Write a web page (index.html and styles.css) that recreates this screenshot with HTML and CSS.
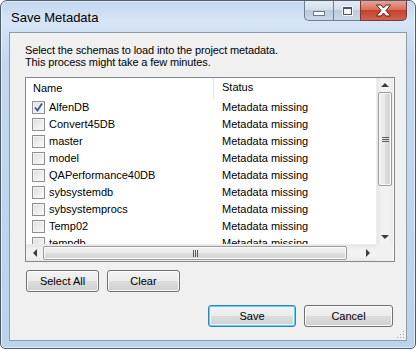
FILE: index.html
```html
<!DOCTYPE html>
<html>
<head>
<meta charset="utf-8">
<link rel="stylesheet" href="styles.css">
</head>
<body>
<div class="window">
  <div class="titlebar">
    <div class="title">Save Metadata</div>
    <div class="caption-btns">
      <div class="cap cap-min"><span class="min-glyph"></span></div>
      <div class="cap cap-max"><span class="max-glyph"></span></div>
      <div class="cap cap-close">
        <svg width="17" height="13" viewBox="0 0 17 13"><path d="M1.5 1 L6 1 L8.5 4 L11 1 L15.5 1 L11 6.5 L15.5 12 L11 12 L8.5 9 L6 12 L1.5 12 L6 6.5 Z" fill="#fff" stroke="#5a2020" stroke-width="1" stroke-linejoin="round"/></svg>
      </div>
    </div>
  </div>
  <div class="client">
    <p class="intro">Select the schemas to load into the project metadata.<br>This process might take a few minutes.</p>
    <div class="listview">
      <div class="lv-content">
        <div class="lv-header">
          <div class="col-name">Name</div>
          <div class="col-status">Status</div>
        </div>
        <div class="lv-row"><div class="col-name"><span class="cb checked"><svg width="11" height="11" viewBox="0 0 11 11"><path d="M2 5.5 L4.5 8.5 L9 1.5" fill="none" stroke="#3c5396" stroke-width="1.8"/></svg></span>AlfenDB</div><div class="col-status">Metadata missing</div></div>
        <div class="lv-row"><div class="col-name"><span class="cb"></span>Convert45DB</div><div class="col-status">Metadata missing</div></div>
        <div class="lv-row"><div class="col-name"><span class="cb"></span>master</div><div class="col-status">Metadata missing</div></div>
        <div class="lv-row"><div class="col-name"><span class="cb"></span>model</div><div class="col-status">Metadata missing</div></div>
        <div class="lv-row"><div class="col-name"><span class="cb"></span>QAPerformance40DB</div><div class="col-status">Metadata missing</div></div>
        <div class="lv-row"><div class="col-name"><span class="cb"></span>sybsystemdb</div><div class="col-status">Metadata missing</div></div>
        <div class="lv-row"><div class="col-name"><span class="cb"></span>sybsystemprocs</div><div class="col-status">Metadata missing</div></div>
        <div class="lv-row"><div class="col-name"><span class="cb"></span>Temp02</div><div class="col-status">Metadata missing</div></div>
        <div class="lv-row"><div class="col-name"><span class="cb"></span>tempdb</div><div class="col-status">Metadata missing</div></div>
      </div>
      <div class="vscroll">
        <div class="sb-btn"><span class="arr-up"></span></div>
        <div class="vthumb"><span class="grip-h"></span></div>
        <div class="sb-track"></div>
        <div class="sb-btn"><span class="arr-down"></span></div>
      </div>
      <div class="hscroll">
        <div class="sb-btn-h"><span class="arr-left"></span></div>
        <div class="hthumb"><span class="grip-v"></span></div>
        <div class="sb-track"></div>
        <div class="sb-btn-h"><span class="arr-right"></span></div>
      </div>
      <div class="corner"></div>
    </div>
    <div class="row-btns">
      <button class="btn w73">Select All</button>
      <button class="btn w73">Clear</button>
    </div>
    <div class="row-dialog">
      <button class="btn btn-default w88">Save</button>
      <button class="btn w89">Cancel</button>
    </div>
    <div class="grip">
      <i class="d d1"></i><i class="d d2"></i><i class="d d3"></i><i class="d d4"></i><i class="d d5"></i><i class="d d6"></i>
    </div>
  </div>
</div>
</body>
</html>
```
FILE: styles.css
```css
html, body {
  margin: 0;
  padding: 0;
  background: #ffffff;
}
.window {
  width: 416px;
  height: 349px;
  box-sizing: border-box;
  border: 1px solid #4e5c6c;
  border-radius: 7px 7px 5px 5px;
  background: linear-gradient(180deg, #c2d7ee 0px, #d6e5f6 20px, #c3d8ef 60px, #bcd3ec 100%);
  padding: 0 8px 7px 8px;
  display: flex;
  flex-direction: column;
  box-shadow: inset 0 0 0 1px rgba(255,255,255,0.55);
}
.titlebar {
  height: 31px;
  display: flex;
  align-items: flex-start;
  justify-content: space-between;
  flex: none;
}
.title {
  font-family: "Liberation Sans", Arial, sans-serif;
  font-size: 13px;
  line-height: 15px;
  color: #000;
  margin-top: 9px;
  margin-left: 2px;
}
.caption-btns {
  display: flex;
  height: 20px;
}
.cap {
  height: 20px;
  box-sizing: border-box;
  border: 1px solid #6f7f92;
  border-top: none;
  display: flex;
  align-items: center;
  justify-content: center;
}
.cap-min {
  width: 29px;
  border-radius: 0 0 0 5px;
  background: linear-gradient(180deg, #e3ebf5 0%, #d4dfec 45%, #bccbdd 50%, #c8d6e7 100%);
  border-right: none;
}
.cap-max {
  width: 27px;
  background: linear-gradient(180deg, #e3ebf5 0%, #d4dfec 45%, #bccbdd 50%, #c8d6e7 100%);
  border-right: none;
}
.cap-close {
  width: 47px;
  border-radius: 0 0 5px 0;
  border-color: #7b3a3a;
  background: linear-gradient(180deg, #e8a493 0%, #d8705d 45%, #c4422e 50%, #d2634f 100%);
}
.min-glyph {
  width: 10px;
  height: 3px;
  border: 1px solid #6a7689;
  background: #f7f9fc;
  margin-top: 5px;
}
.max-glyph {
  width: 7px;
  height: 5px;
  border: 1px solid #4a5568;
  border-top-width: 2px;
  background: #f7f9fc;
  box-shadow: 0 0 0 1px #f2f5fa;
}
.client {
  flex: 1;
  box-sizing: border-box;
  background: #f0f0f0;
  border: 1px solid #8d9baa;
  padding: 0 10px 0 15px;
  display: flex;
  flex-direction: column;
  position: relative;
  font-family: "Liberation Sans", Arial, sans-serif;
  font-size: 11px;
  color: #000;
}
.intro {
  margin: 11px 0 0 0;
  line-height: 12px;
  letter-spacing: -0.12px;
}
.listview {
  margin-top: 9px;
  width: 370px;
  height: 185px;
  box-sizing: border-box;
  border: 1px solid #828790;
  background: #fff;
  display: grid;
  grid-template-columns: 350px 17px;
  grid-template-rows: 166px 17px;
  overflow: hidden;
}
.lv-content {
  overflow: hidden;
  background: #fff;
}
.lv-header {
  display: flex;
  height: 21px;
  align-items: center;
  background: #fff;
}
.lv-header .col-name {
  border-right: 1px solid #e5e5e5;
  height: 21px;
  line-height: 19px;
  padding-left: 7px;
}
.lv-header .col-status {
  line-height: 19px;
  height: 21px;
}
.col-name {
  width: 188px;
  box-sizing: border-box;
  flex: none;
  display: flex;
  align-items: center;
}
.col-status {
  padding-left: 8px;
}
.lv-row {
  display: flex;
  height: 17px;
  align-items: center;
  line-height: 17px;
}
.lv-row .col-name {
  padding-left: 6px;
}
.cb {
  width: 13px;
  height: 13px;
  box-sizing: border-box;
  border: 1px solid #8f8f8f;
  background: linear-gradient(135deg, #dcdcdc 0%, #ececec 50%, #fbfbfb 100%);
  box-shadow: inset 0 0 0 1px #f4f4f4;
  margin-right: 4px;
  flex: none;
  display: flex;
  align-items: center;
  justify-content: center;
}
.cb.checked {
  background: linear-gradient(135deg, #d8dde8 0%, #eef1f6 60%, #fbfbfb 100%);
}
.vscroll {
  display: flex;
  flex-direction: column;
  background: linear-gradient(90deg, #e6e6e6 0%, #f2f2f2 30%, #f2f2f2 70%, #e9e9e9 100%);
  border-left: 1px solid #ececec;
  box-sizing: border-box;
}
.hscroll {
  display: flex;
  flex-direction: row;
  background: linear-gradient(180deg, #e6e6e6 0%, #f2f2f2 30%, #f2f2f2 70%, #e9e9e9 100%);
  border-top: 1px solid #ececec;
  box-sizing: border-box;
}
.corner {
  background: #f0f0f0;
}
.sb-btn {
  height: 14px;
  flex: none;
  display: flex;
  align-items: center;
  justify-content: center;
}
.sb-btn-h {
  width: 17px;
  flex: none;
  display: flex;
  align-items: center;
  justify-content: center;
}
.sb-track {
  flex: 1;
}
.arr-up {
  width: 0; height: 0;
  border-left: 4px solid transparent;
  border-right: 4px solid transparent;
  border-bottom: 4px solid #3c3c3c;
}
.arr-down {
  width: 0; height: 0;
  border-left: 4px solid transparent;
  border-right: 4px solid transparent;
  border-top: 4px solid #3c3c3c;
}
.arr-left {
  width: 0; height: 0;
  border-top: 4px solid transparent;
  border-bottom: 4px solid transparent;
  border-right: 4px solid #3c3c3c;
}
.arr-right {
  width: 0; height: 0;
  border-top: 4px solid transparent;
  border-bottom: 4px solid transparent;
  border-left: 4px solid #3c3c3c;
}
.vthumb {
  height: 94px;
  margin: 0 1px;
  flex: none;
  box-sizing: border-box;
  border: 1px solid #9b9b9b;
  border-radius: 2px;
  background: linear-gradient(90deg, #f0f0f0 0%, #ececec 45%, #dcdcdc 55%, #d3d3d3 100%);
  box-shadow: inset 0 0 0 1px #fbfbfb;
  display: flex;
  align-items: center;
  justify-content: center;
}
.hthumb {
  width: 304px;
  margin: 1px 0;
  flex: none;
  box-sizing: border-box;
  border: 1px solid #9b9b9b;
  border-radius: 2px;
  background: linear-gradient(180deg, #f0f0f0 0%, #ececec 45%, #dcdcdc 55%, #d3d3d3 100%);
  box-shadow: inset 0 0 0 1px #fbfbfb;
  display: flex;
  align-items: center;
  justify-content: center;
}
.grip-h {
  width: 7px;
  height: 5px;
  background: repeating-linear-gradient(180deg, #5a5a5a 0, #5a5a5a 1px, transparent 1px, transparent 2px);
}
.grip-v {
  width: 5px;
  height: 7px;
  background: repeating-linear-gradient(90deg, #5a5a5a 0, #5a5a5a 1px, transparent 1px, transparent 2px);
}
.row-btns {
  display: flex;
  gap: 8px;
  margin-top: 8px;
  padding-left: 1px;
}
.row-dialog {
  display: flex;
  gap: 8px;
  margin-top: 13px;
  justify-content: flex-end;
  width: 368px;
}
.btn {
  height: 22px;
  box-sizing: border-box;
  border: 1px solid #707070;
  border-radius: 3px;
  background: linear-gradient(180deg, #f2f2f2 0%, #ebebeb 50%, #dddddd 50%, #cfcfcf 100%);
  box-shadow: inset 0 0 0 1px #fbfbfb;
  font-family: "Liberation Sans", Arial, sans-serif;
  font-size: 11px;
  color: #000;
  padding: 0;
  margin: 0;
}
.btn-default {
  border-color: #3c7fb1;
  box-shadow: inset 0 0 0 1px #5fd2f5, inset 0 0 0 2px #eaf6fb;
}
.w73 { width: 73px; }
.w88 { width: 88px; }
.w89 { width: 89px; }
.grip {
  position: absolute;
  right: 2px;
  bottom: 2px;
  width: 8px;
  height: 8px;
}
.d {
  position: absolute;
  width: 1px;
  height: 1px;
  background: #a0a0a0;
}
.d1 { right: 0; bottom: 0; }
.d2 { right: 3px; bottom: 0; }
.d3 { right: 6px; bottom: 0; }
.d4 { right: 0; bottom: 3px; }
.d5 { right: 3px; bottom: 3px; }
.d6 { right: 0; bottom: 6px; }
```
